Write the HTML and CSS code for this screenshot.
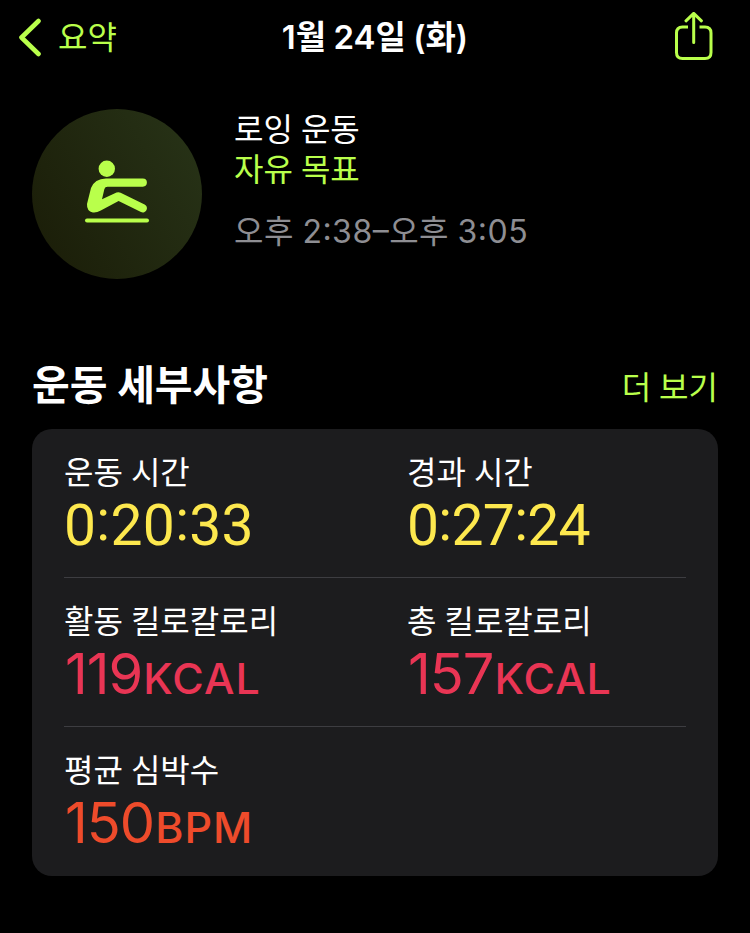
FILE: index.html
```html
<!DOCTYPE html>
<html lang="ko">

<head>
    <meta charset="UTF-8">
    <meta name="viewport" content="width=device-width, initial-scale=1.0">
    <title>로잉 운동</title>
    <link rel="stylesheet" href="styles.css">
</head>

<body>
    <header class="navbar">
        <a class="back">
            <svg class="chevron" width="24" height="40" viewBox="0 0 24 40">
                <path d="M21.5 4 L4.5 20.5 L21.5 37" />
            </svg>
            <span>요약</span>
        </a>
        <h1 class="date">1월 24일 (화)</h1>
        <a class="share">
            <svg width="40" height="50" viewBox="0 0 40 50">
                <path d="M14 15 H8.5 Q2.5 15 2.5 21 V40.5 Q2.5 46.5 8.5 46.5 H31 Q37 46.5 37 40.5 V21 Q37 15 31 15 H25.5" />
                <path class="round" d="M19.7 30.5 V2 M12 8.8 L19.7 1.4 L27.4 8.8" />
            </svg>
        </a>
    </header>

    <section class="summary">
        <div class="badge">
            <svg width="66" height="64" viewBox="0 0 66 64">
                <circle cx="22.8" cy="8.8" r="8.2" />
                <path d="M22 18.5 H58.8 A4.1 4.1 0 0 1 58.8 26.7 H23.5 Q21 26.7 20.4 29 L18 39.2 L32.5 32.6 Q34.6 31.8 36.6 32.7 L60.6 44.5 A4.1 4.1 0 0 1 57 52 L34.6 41 L16.8 50.5 Q12.5 53 8.8 52.5 Q2.6 51 3 44 L7 28 Q10.5 18.8 22 18.5 Z" />
                <rect x="1" y="58.4" width="64" height="4" rx="2" />
            </svg>
        </div>
        <div class="info">
            <div class="workout">로잉 운동</div>
            <div class="goal">자유 목표</div>
            <div class="time">오후 2:38–오후 3:05</div>
        </div>
    </section>

    <div class="sectionTitle">
        <h2>운동 세부사항</h2>
        <a class="more">더 보기</a>
    </div>

    <section class="card">
        <div class="row">
            <div class="cell">
                <div class="label">운동 시간</div>
                <div class="value duration">0<span class="colon">:</span>20<span class="colon">:</span>33</div>
            </div>
            <div class="cell">
                <div class="label">경과 시간</div>
                <div class="value duration tight">0<span class="colon">:</span>27<span class="colon">:</span>24</div>
            </div>
        </div>
        <div class="row">
            <div class="cell">
                <div class="label">활동 킬로칼로리</div>
                <div class="value pink">119<span class="unit">KCAL</span></div>
            </div>
            <div class="cell">
                <div class="label">총 킬로칼로리</div>
                <div class="value pink">157<span class="unit">KCAL</span></div>
            </div>
        </div>
        <div class="row">
            <div class="cell">
                <div class="label">평균 심박수</div>
                <div class="value orange">150<span class="unit">BPM</span></div>
            </div>
        </div>
    </section>
</body>

</html>
```

FILE: styles.css
```css
* {
    box-sizing: border-box;
}

body {
    margin: 0;
    height: 933px;
    background-color: #000;
    color: #fff;
    font-family: Inter, "Noto Sans CJK KR", sans-serif;
    font-size: 32px;
    word-spacing: -1px;
    overflow: hidden;
    white-space: nowrap;
}

h1,
h2 {
    margin: 0;
}

.navbar {
    display: grid;
    grid-template-columns: 1fr auto 1fr;
    align-items: center;
    height: 74px;
    padding: 0 17px;
}

.back {
    display: flex;
    align-items: center;
    gap: 17px;
    color: #b9ff4b;
}

.back span {
    padding-bottom: 5px;
}

.chevron path {
    fill: none;
    stroke: #b9ff4b;
    stroke-width: 4.6;
    stroke-linecap: round;
    stroke-linejoin: round;
}

.date {
    font-size: 33px;
    font-weight: 600;
    line-height: 40px;
}

.share {
    display: flex;
    justify-content: flex-end;
    padding-right: 19px;
}

.share path {
    fill: none;
    stroke: #b9ff4b;
    stroke-width: 3;
}

.share .round {
    stroke-linecap: round;
    stroke-linejoin: round;
}

.summary {
    display: flex;
    gap: 32px;
    padding: 35px 32px 0;
}

.badge {
    display: flex;
    justify-content: center;
    align-items: center;
    width: 170px;
    height: 170px;
    padding-bottom: 5px;
    border-radius: 50%;
    background: linear-gradient(60deg, #1a1c07, #283418);
}

.badge svg {
    fill: #b9ff4b;
}

.info {
    line-height: 41px;
}

.workout,
.goal {
    height: 40px;
}

.goal {
    color: #b9ff4b;
}

.time {
    margin-top: 22px;
    color: #8e8e93;
    letter-spacing: 0.5px;
    font-feature-settings: "case";
}

.sectionTitle {
    display: flex;
    justify-content: space-between;
    align-items: flex-end;
    height: 150px;
    padding: 0 32px 19px;
}

h2 {
    font-size: 41px;
    font-weight: 700;
    line-height: 50px;
    word-spacing: 0;
}

.more {
    line-height: 44px;
    color: #b9ff4b;
}

.card {
    margin: 0 32px;
    height: 447px;
    padding: 0 32px;
    border-radius: 20px;
    background-color: #1c1c1e;
}

.row {
    display: grid;
    grid-template-columns: 343px 1fr;
    height: 149px;
    padding-top: 24px;
    border-bottom: 1px solid #3d3d41;
}

.row:last-child {
    border-bottom: none;
}

.label {
    line-height: 40px;
}

.value {
    margin-top: 4px;
    padding-left: 1px;
    font-size: 56px;
    line-height: 56px;
    letter-spacing: -1px;
}

.unit {
    padding-left: 1px;
    font-size: 43px;
    font-weight: 450;
    letter-spacing: 1px;
}

.duration {
    margin-top: 5px;
    padding-left: 0;
    font-family: Roboto, sans-serif;
    font-size: 57px;
    letter-spacing: 0.3px;
    color: #fde84e;
}

.tight {
    letter-spacing: -0.7px;
}

.colon {
    position: relative;
    top: -5px;
}

.pink {
    color: #e93554;
}

.orange {
    color: #ee4b2b;
}
```
